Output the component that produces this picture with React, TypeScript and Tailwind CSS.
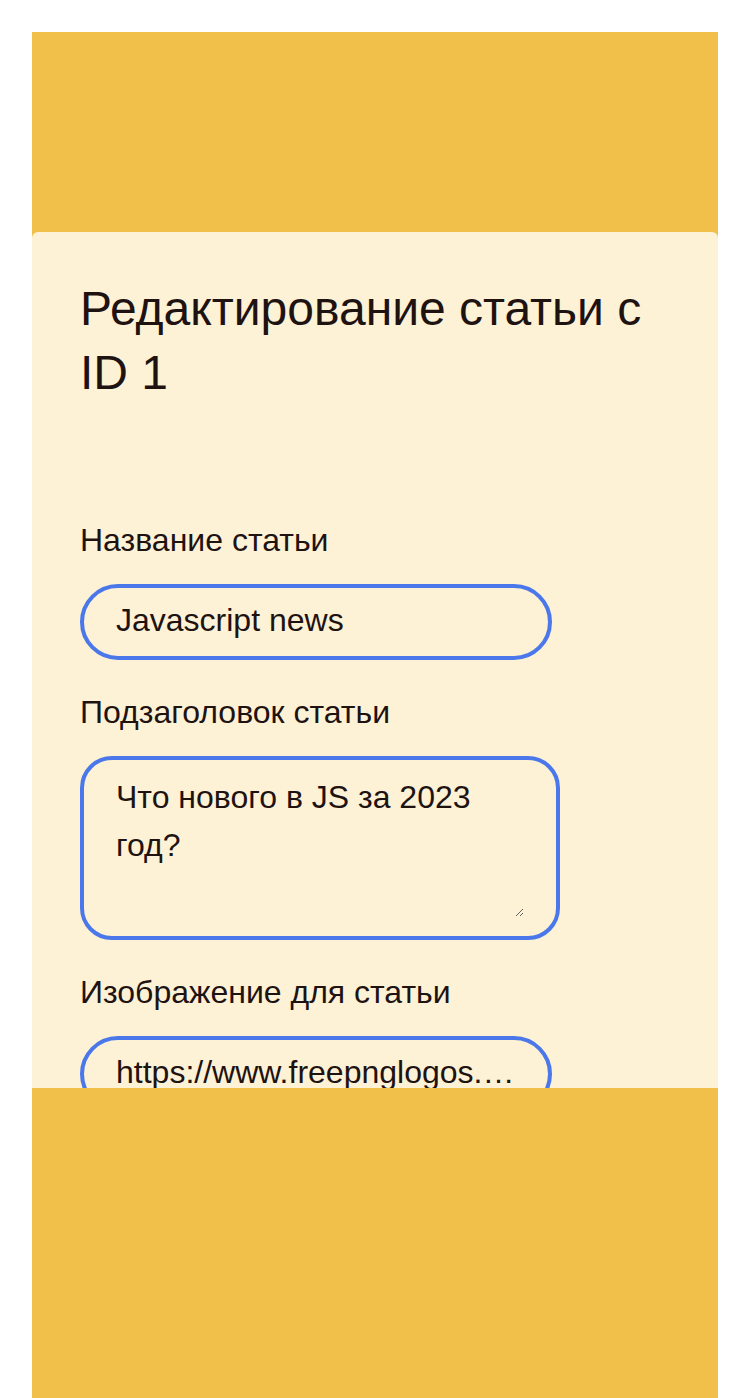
export default function App() {
  const font = { fontFamily: "'Liberation Sans', Arial, sans-serif" }

  return (
    <div className="min-h-screen bg-white px-8 pt-8" style={font}>
      <div className="min-h-[1366px] bg-[#f0c04a]">
        <div className="h-[200px]" />
        <div className="h-[856px] overflow-hidden rounded-t-[6px] bg-[#fdf1d6] px-12 pt-[45px] text-[#1e1311]">
          <h1 className="text-[48px] leading-[64px] font-normal">Редактирование статьи с ID 1</h1>

          <form className="mt-[117px] flex flex-col gap-[34px]">
            <div className="flex flex-col gap-[26px]">
              <label className="text-[32px] leading-[36px]">Название статьи</label>
              <input
                className="h-[76px] w-[472px] rounded-full border-4 border-[#4a78ea] bg-transparent px-8 pb-1 text-[32px] text-[#1e1311] outline-none"
                style={font}
                defaultValue="Javascript news"
              />
            </div>

            <div className="flex flex-col gap-[26px]">
              <label className="text-[32px] leading-[36px]">Подзаголовок статьи</label>
              <div className="h-[184px] w-[480px] rounded-[32px] border-4 border-[#4a78ea] px-8 pt-[13px]">
                <textarea
                  className="block h-[144px] w-full bg-transparent text-[32px] leading-[48px] text-[#1e1311] outline-none"
                  style={font}
                  rows={3}
                  defaultValue="Что нового в JS за 2023 год?"
                />
              </div>
            </div>

            <div className="flex flex-col gap-[26px]">
              <label className="text-[32px] leading-[36px]">Изображение для статьи</label>
              <input
                className="h-[76px] w-[472px] overflow-hidden text-ellipsis rounded-full border-4 border-[#4a78ea] bg-transparent px-8 pb-1 text-[32px] text-[#1e1311] outline-none"
                style={font}
                defaultValue="https://www.freepnglogos.com/uploads/javascript-png/javascript-logo-transparent-logo-javascript-images-3.png"
              />
            </div>
          </form>
        </div>
      </div>
    </div>
  )
}
